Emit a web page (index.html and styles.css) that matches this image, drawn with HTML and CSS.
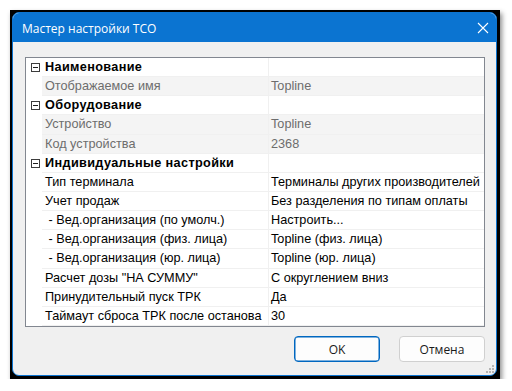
FILE: index.html
```html
<!DOCTYPE html>
<html lang="ru">
<head>
<meta charset="utf-8">
<title>Мастер настройки TCO</title>
<link rel="stylesheet" href="styles.css">
</head>
<body>
<div class="frame">
  <div class="window">
    <div class="titlebar">
      <span class="title">Мастер настройки TCO</span>
      <svg class="close" width="12" height="12" viewBox="0 0 12 12"><path d="M1 1L11 11M11 1L1 11" stroke="#fff" stroke-width="1.1" fill="none"/></svg>
    </div>
    <div class="content">
      <div class="grid">
        <div class="row cat"><div class="m"><svg class="box" width="9" height="9" viewBox="0 0 9 9"><rect x="0.5" y="0.5" width="8" height="8" fill="#fff" stroke="#3c3c3c"/><path d="M2 4.5H7" stroke="#1e1e1e"/></svg></div><div class="n">Наименование</div><div class="v"></div></div>
        <div class="row ro"><div class="m"></div><div class="n">Отображаемое имя</div><div class="v">Topline</div></div>
        <div class="row cat"><div class="m"><svg class="box" width="9" height="9" viewBox="0 0 9 9"><rect x="0.5" y="0.5" width="8" height="8" fill="#fff" stroke="#3c3c3c"/><path d="M2 4.5H7" stroke="#1e1e1e"/></svg></div><div class="n">Оборудование</div><div class="v"></div></div>
        <div class="row ro"><div class="m"></div><div class="n">Устройство</div><div class="v">Topline</div></div>
        <div class="row ro"><div class="m"></div><div class="n">Код устройства</div><div class="v">2368</div></div>
        <div class="row cat"><div class="m"><svg class="box" width="9" height="9" viewBox="0 0 9 9"><rect x="0.5" y="0.5" width="8" height="8" fill="#fff" stroke="#3c3c3c"/><path d="M2 4.5H7" stroke="#1e1e1e"/></svg></div><div class="n">Индивидуальные настройки</div><div class="v"></div></div>
        <div class="row"><div class="m"></div><div class="n">Тип терминала</div><div class="v">Терминалы других производителей</div></div>
        <div class="row"><div class="m"></div><div class="n">Учет продаж</div><div class="v">Без разделения по типам оплаты</div></div>
        <div class="row"><div class="m"></div><div class="n">&nbsp;- Вед.организация (по умолч.)</div><div class="v">Настроить...</div></div>
        <div class="row"><div class="m"></div><div class="n">&nbsp;- Вед.организация (физ. лица)</div><div class="v">Topline (физ. лица)</div></div>
        <div class="row"><div class="m"></div><div class="n">&nbsp;- Вед.организация (юр. лица)</div><div class="v">Topline (юр. лица)</div></div>
        <div class="row"><div class="m"></div><div class="n">Расчет дозы "НА СУММУ"</div><div class="v">С округлением вниз</div></div>
        <div class="row"><div class="m"></div><div class="n">Принудительный пуск ТРК</div><div class="v">Да</div></div>
        <div class="row"><div class="m"></div><div class="n">Таймаут сброса ТРК после останова</div><div class="v">30</div></div>
      </div>
      <div class="buttons">
        <button class="btn default">OK</button>
        <button class="btn">Отмена</button>
      </div>
    </div>
    <svg class="grip" width="8" height="8" viewBox="0 0 8 8"><g fill="#b4b4b4"><rect x="6" y="0" width="2" height="2"/><rect x="3" y="3" width="2" height="2"/><rect x="6" y="3" width="2" height="2"/><rect x="0" y="6" width="2" height="2"/><rect x="3" y="6" width="2" height="2"/><rect x="6" y="6" width="2" height="2"/></g></svg>
  </div>
</div>
</body>
</html>
```

FILE: styles.css
```css
html, body {
  margin: 0;
  padding: 0;
  background: #ffffff;
}

.frame {
  box-sizing: border-box;
  margin: 10px 0 0 10px;
  width: 490px;
  height: 369px;
  background: #000;
  padding: 2px 3px 3px 2px;
  box-shadow: 2px 3px 5px rgba(0, 0, 0, 0.45);
}

.window {
  box-sizing: border-box;
  position: relative;
  height: 100%;
  border: 1px solid #0c74d0;
  border-radius: 7px;
  background: #f0f0f0;
  overflow: hidden;
  display: flex;
  flex-direction: column;
}

.titlebar {
  height: 29px;
  background: #0b74d1;
  display: flex;
  align-items: center;
  justify-content: space-between;
  padding: 0 7px 0 9px;
  flex: none;
}

.title {
  font-family: "Open Sans", "Noto Sans", sans-serif;
  font-size: 12px;
  color: #fff;
  padding-top: 1px;
}

.close {
  display: block;
  margin-top: 1px;
}

.content {
  padding: 15px 11px 0 12px;
  display: flex;
  flex-direction: column;
}

.grid {
  border: 1px solid #828790;
  background: #fff;
  height: 270px;
  box-sizing: border-box;
  font-family: "Liberation Sans", Arial, sans-serif;
  font-size: 12.7px;
  color: #000;
}

.row {
  display: grid;
  grid-template-columns: 16px 227px 1fr;
  height: 19.15px;
}

.row .m {
  background: #fff;
  display: flex;
  align-items: center;
  padding-left: 5px;
}

.row .n,
.row .v {
  box-sizing: border-box;
  border-bottom: 1px solid #f0f0f0;
  display: flex;
  align-items: center;
  white-space: nowrap;
  overflow: hidden;
}

.row .n {
  border-right: 1px solid #f0f0f0;
  padding-left: 3px;
}

.row .v {
  padding-left: 2px;
}

.row.cat .n {
  font-weight: bold;
  letter-spacing: 0.35px;
  overflow: visible;
  border-right-color: transparent;
}

.row.cat .v {
  border-left: 1px solid #f0f0f0;
  margin-left: -1px;
}

.row.ro .n,
.row.ro .v {
  background: #f4f4f4;
  color: #6d6d6d;
}

.box {
  display: block;
}

.buttons {
  display: flex;
  justify-content: flex-end;
  gap: 19px;
  margin-top: 9px;
}

.btn {
  box-sizing: border-box;
  width: 86px;
  height: 26px;
  border: 1px solid #d0d0d0;
  border-radius: 4px;
  background: #fdfdfd;
  font-family: "Open Sans", "Noto Sans", sans-serif;
  font-size: 12px;
  color: #1a1a1a;
  padding: 0;
}

.btn.default {
  border-color: #0067c0;
  box-shadow: inset 0 0 0 0.5px #0067c0;
}

.grip {
  position: absolute;
  right: 2px;
  bottom: 2px;
}
```
